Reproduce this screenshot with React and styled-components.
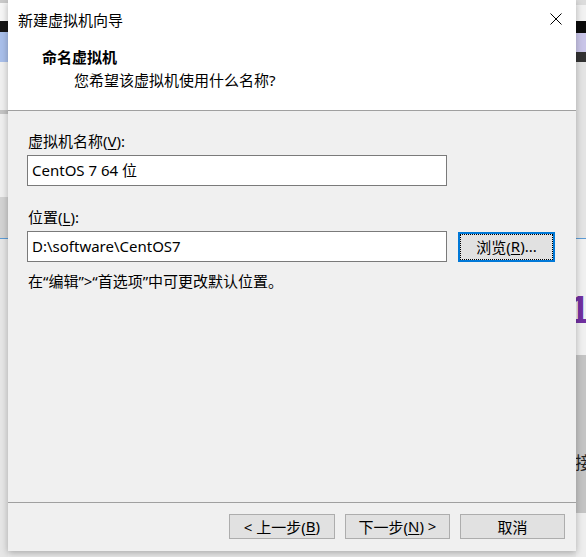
import React from "react";
import styled, { createGlobalStyle } from "styled-components";

const GlobalStyle = createGlobalStyle`
	html, body {
		margin: 0;
		padding: 0;
		background: #e9e9e9;
	}
	* {
		box-sizing: border-box;
	}
`;

const leftBands = [
	{ h: 3, c: "#c9c9c9" },
	{ h: 18, c: "#f6f6f6" },
	{ h: 11, c: "#161616" },
	{ h: 30, c: "#a9bfea" },
	{ h: 48, c: "#f0f0f0" },
	{ h: 4, c: "#c3c3c3" },
	{ h: 83, c: "#efefef" },
	{ h: 41, c: "#d3d3d3" },
	{ h: 1, c: "#5b9bd5" },
	{ h: 318, c: "#e6e6e6" },
];

function App() {
	return (
		<>
			<GlobalStyle />
			<Screen>
				<Strip $w={8}>
					{leftBands.map((b, i) => (
						<Band key={i} $h={b.h} $c={b.c} />
					))}
				</Strip>

				<Dialog>
					<Header>
						<TitleBar>
							<Title>新建虚拟机向导</Title>
							<CloseButton>
								<svg width="12" height="12" viewBox="0 0 12 12">
									<path d="M0.5 0.5 L11.5 11.5 M11.5 0.5 L0.5 11.5" stroke="#000" strokeWidth="1" fill="none" />
								</svg>
							</CloseButton>
						</TitleBar>
						<Heading>命名虚拟机</Heading>
						<SubHeading>您希望该虚拟机使用什么名称?</SubHeading>
					</Header>

					<Body>
						<Label>
							虚拟机名称(<u>V</u>):
						</Label>
						<Field>
							<TextBox>CentOS 7 64 位</TextBox>
						</Field>

						<Label $top={21}>
							位置(<u>L</u>):
						</Label>
						<Field>
							<TextBox>D:\software\CentOS7</TextBox>
							<Button $width={97} $height={30} $focused>
								浏览(<u>R</u>)...
							</Button>
						</Field>

						<Hint>在“编辑”&gt;“首选项”中可更改默认位置。</Hint>
					</Body>

					<Footer>
						<Button $width={106}>
							&lt; 上一步(<u>B</u>)
						</Button>
						<Button $width={105}>
							下一步(<u>N</u>) &gt;
						</Button>
						<Button $width={105}>取消</Button>
					</Footer>
				</Dialog>

				<Strip $w={10}>
					<Band $h={5} $c="#dcdcdc" />
					<Band $h={16} $c="#f2f2f2" />
					<Band $h={12} $c="#0b0b0b" />
					<Band $h={19} $c="#c9c5e8" />
					<Band $h={10} $c="#333333" />
					<Band $h={176} $c="#e4e4e4" />
					<Band $h={1} $c="#5b9bd5" />
					<TextBand $h={116} $c="#f0f0f0" $pad={56}>
						<Purple>1</Purple>
					</TextBand>
					<TextBand $h={158} $c="#c4c4c4" $pad={98}>
						<Peek>接</Peek>
					</TextBand>
					<Band $h={44} $c="#eeeeee" />
				</Strip>
			</Screen>
		</>
	);
}
export default App;

const Screen = styled.div`
	display: flex;
	width: 586px;
	height: 557px;
	overflow: hidden;
	font-family: "Noto Sans", "Noto Sans CJK SC", sans-serif;
	font-size: 15px;
	color: #000;
`;

const Strip = styled.div`
	display: flex;
	flex-direction: column;
	width: ${(p) => p.$w}px;
	flex-shrink: 0;
	overflow: hidden;
`;

const Band = styled.div`
	height: ${(p) => p.$h}px;
	flex-shrink: 0;
	background: ${(p) => p.$c};
`;

const TextBand = styled(Band)`
	padding-top: ${(p) => p.$pad}px;
	overflow: hidden;
	line-height: 1;
`;

const Purple = styled.span`
	display: block;
	margin-left: -7px;
	font-family: "Liberation Sans", sans-serif;
	font-weight: bold;
	font-size: 38px;
	line-height: 30px;
	color: #7030a0;
`;

const Peek = styled.span`
	display: block;
	margin-left: -1px;
	font-family: "Noto Sans CJK SC", sans-serif;
	font-size: 17px;
	color: #222;
`;

const Dialog = styled.div`
	position: relative;
	z-index: 1;
	display: flex;
	flex-direction: column;
	width: 568px;
	height: 551px;
	flex-shrink: 0;
	background: #f0f0f0;
	box-shadow: 0 2px 7px rgba(0, 0, 0, 0.28);
`;

const Header = styled.div`
	height: 111px;
	background: #fff;
	border-bottom: 1px solid #a0a0a0;
`;

const TitleBar = styled.div`
	display: flex;
	align-items: center;
	justify-content: space-between;
	height: 40px;
	padding: 0 14px 0 10px;
`;

const Title = styled.div`
	line-height: 20px;
`;

const CloseButton = styled.div`
	display: flex;
	width: 12px;
	height: 12px;
	margin-top: -2px;
`;

const Heading = styled.div`
	margin: 7px 0 0 34px;
	line-height: 20px;
	font-weight: bold;
	font-family: "Noto Sans CJK SC", sans-serif;
`;

const SubHeading = styled.div`
	margin: 3px 0 0 66px;
	line-height: 20px;
`;

const Body = styled.div`
	flex: 1;
	padding: 20px 0 0 19px;
`;

const Label = styled.div`
	margin: ${(p) => p.$top || 0}px 0 4px 1px;
	line-height: 20px;

	u {
		text-underline-offset: 2px;
	}
`;

const Field = styled.div`
	display: flex;
	align-items: center;
	gap: 11px;
`;

const TextBox = styled.div`
	width: 420px;
	height: 31px;
	padding: 0 4px 2px;
	display: flex;
	align-items: center;
	background: #fff;
	border: 1px solid #7a7a7a;
	white-space: nowrap;
`;

const Hint = styled.div`
	margin: 9px 0 0 1px;
	line-height: 20px;
`;

const Footer = styled.div`
	display: flex;
	justify-content: flex-end;
	align-items: flex-start;
	gap: 10px;
	height: 49px;
	padding: 11px 11px 0 0;
	border-top: 1px solid #a0a0a0;
`;

const Button = styled.div`
	display: flex;
	align-items: center;
	justify-content: center;
	width: ${(p) => p.$width}px;
	height: ${(p) => p.$height || 25}px;
	padding-bottom: 1px;
	background: #e1e1e1;
	border: ${(p) => (p.$focused ? "2px solid #0078d7" : "1px solid #adadad")};
	outline: ${(p) => (p.$focused ? "1px dotted #000" : "none")};
	outline-offset: -3px;
	white-space: nowrap;

	u {
		text-underline-offset: 2px;
	}
`;
